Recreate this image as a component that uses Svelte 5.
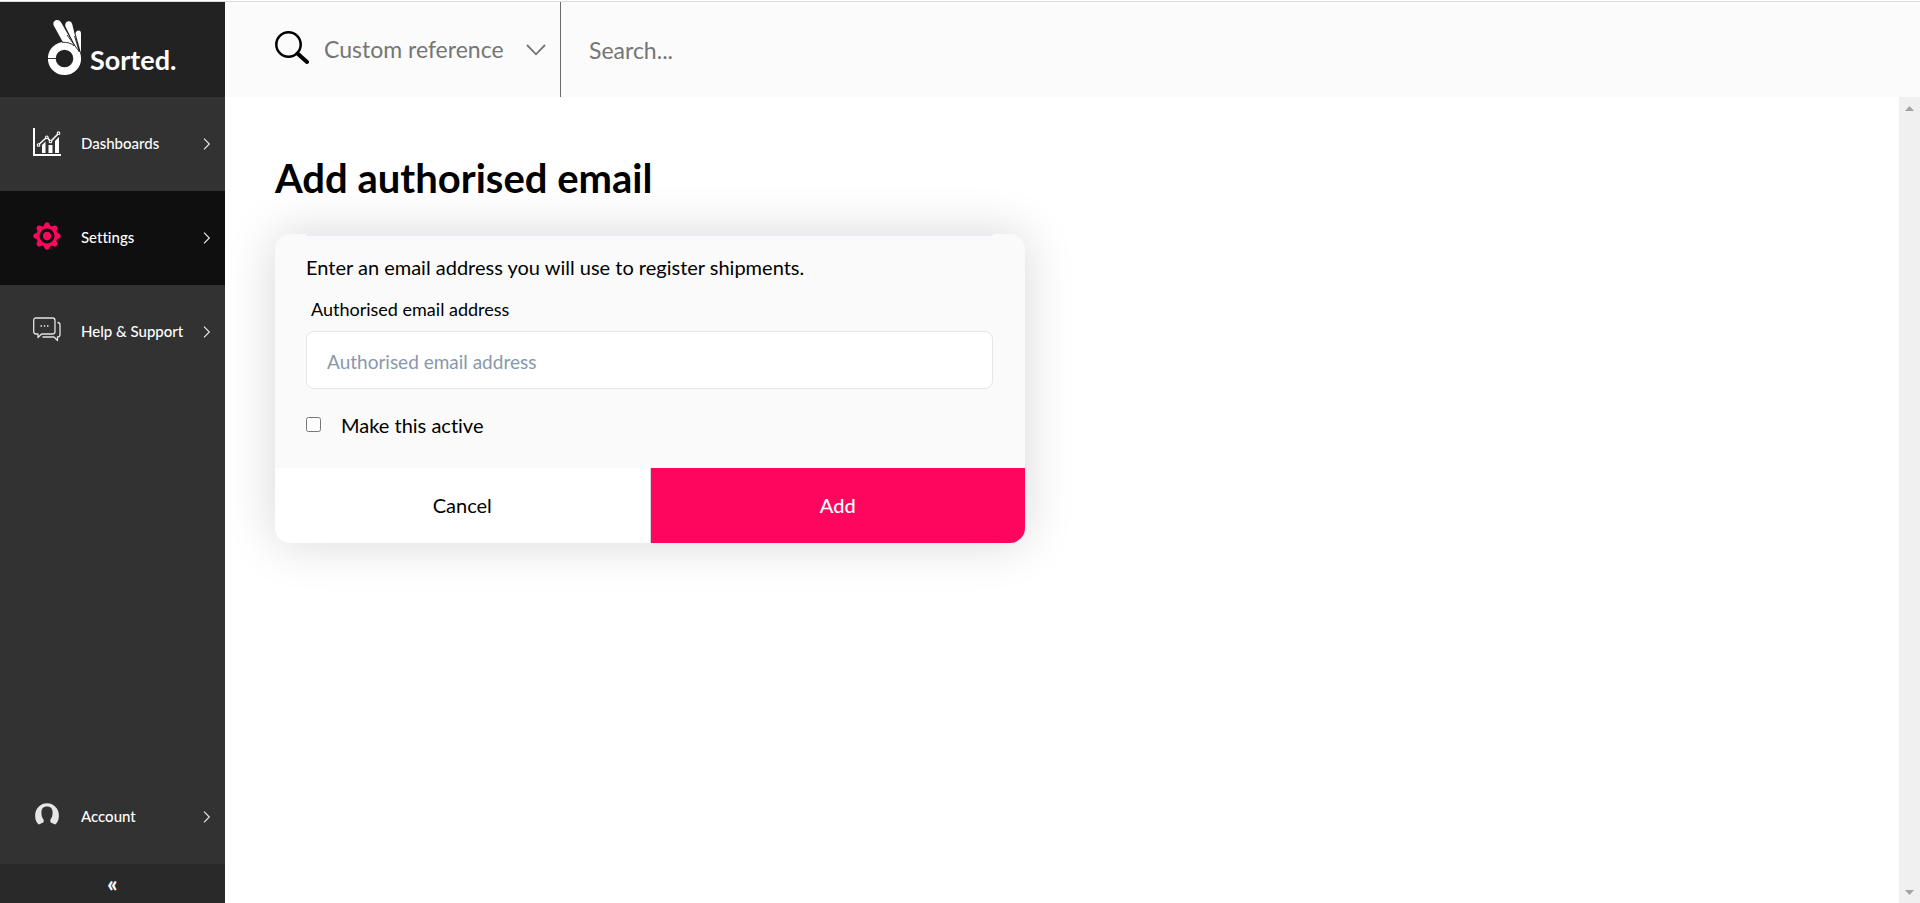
<script>
  let email = $state('');
  let active = $state(false);
  let query = $state('');

  const links = [
    { label: 'Dashboards', icon: 'chart' },
    { label: 'Settings', icon: 'gear', current: true },
    { label: 'Help & Support', icon: 'chat' }
  ];
  const teeth = [0, 45, 90, 135, 180, 225, 270, 315];
</script>

{#snippet chevron()}
  <svg class="chevron" width="8" height="12" viewBox="0 0 8 12" aria-hidden="true">
    <path d="M1 .7 6.3 6 1 11.3" fill="none" stroke="#e4e4e4" stroke-width="1.2" />
  </svg>
{/snippet}

<div class="page">
  <aside>
    <a class="brand" href="#home">
      <svg width="34" height="57" viewBox="0 0 34 57" aria-hidden="true">
        <g fill="#fff">
          <path d="M15 23.2 6.4 7.8C4.6 4.6 5.4 2 7.700 1.200c2.600-.800 4.400.300 5.600 2.600L26 26.200c-3-2.200-6.500-3.200-11-3z" />
          <path d="M17.400 7.500C16.700 4.700 18 2.600 20.200 2.200c2.200-.300 3.600.900 4.100 3.300L31 33c-1.300-3.500-3.300-6-5-8.500z" />
          <path d="M27.500 14.600c.400-2.300 1.600-3.200 3-3.200 1.600 0 2.500 1.100 2.500 3V34z" />
        </g>
        <circle cx="16.500" cy="39.500" r="12.700" fill="none" stroke="#fff" stroke-width="7.800" />
        <path d="M0 39.500h8.500M14 23.300c5-.300 8.500.700 12 3.400M19 16l12.500 17M26.500 17l5 16" fill="none" stroke="#222" stroke-width=".9" />
      </svg>
      <span>Sorted.</span>
    </a>

    <nav aria-label="Main">
      {#each links as link}
        <a class="item" class:current={link.current} href="#{link.icon}">
          <span class="glyph">
            {#if link.icon === 'chart'}
              <svg width="28" height="28" viewBox="0 0 28 28">
                <path d="M1 0v27h27" fill="none" stroke="#fff" stroke-width="2" />
                <path d="M9 17l3.500-3.500V25H9zM15.500 17h4v8h-4zM22 13l4-4v16h-4z" fill="#fff" />
                <path d="M5 17.300 14 9l3.500 4.500L26 5" fill="none" stroke="#fff" stroke-width="1.500" />
                <g fill="#323232" stroke="#fff" stroke-width="1.100">
                  <circle cx="5.500" cy="17" r="1.300" />
                  <circle cx="13.800" cy="9.300" r="1.300" />
                  <circle cx="17.500" cy="13.500" r="1.300" />
                  <circle cx="25.500" cy="5.200" r="1.300" />
                </g>
              </svg>
            {:else if link.icon === 'gear'}
              <svg width="28" height="28" viewBox="0 0 28 28">
                <g fill="#ff065e">
                  {#each teeth as angle}
                    <path d="M10 5.500 11.500 2Q12 .3 14 .3T16.500 2L18 5.500z" transform="rotate({angle} 14 14)" />
                  {/each}
                </g>
                <circle cx="14" cy="14" r="9" fill="#0f0f0f" stroke="#ff065e" stroke-width="3" />
                <circle cx="14" cy="14" r="4.200" fill="#ff065e" />
              </svg>
            {:else}
              <svg width="28" height="26" viewBox="0 0 28 26">
                <g fill="none" stroke="#e4e4e4" stroke-width="1.300" stroke-linejoin="round">
                  <path d="M3 1h16.500Q22 1 22 3.500v11q0 2.500-2.500 2.500H8.500L5 20.500V17H3Q.7 17 .7 14.500v-11Q.7 1 3 1z" />
                  <path d="M24.500 5.500q2.500 0 2.500 2.500v9.500q0 2.500-2.500 2.500v3.500L21 20H9.500" />
                </g>
                <path d="M7.500 9h1.500M10.800 9h1.500M14 9h1.500" stroke="#e4e4e4" stroke-width="1.500" />
              </svg>
            {/if}
          </span>
          <span class="name">{link.label}</span>
          {@render chevron()}
        </a>
      {/each}
    </nav>

    <a class="item account" href="#account">
      <span class="glyph">
        <svg width="24" height="24" viewBox="0 0 24 24">
          <path d="M3.700 21.500A12 12 0 0 1 .2 12 11.800 11.800 0 0 1 23.800 12a12 12 0 0 1-3.500 9.500c-1.600-.800-3-1.300-4.600-2.100-.600-.700-.600-2-.2-3 1.500-1.700 2.100-4 2.100-7C17.600 5.600 15.500 3.500 12 3.500S6.400 5.600 6.400 9.400c0 3 .600 5.300 2.100 7 .4 1 .4 2.300-.2 3-1.600.800-3 1.300-4.600 2.100z" fill="#e6e6e6" />
        </svg>
      </span>
      <span class="name">Account</span>
      {@render chevron()}
    </a>
    <button class="collapse" type="button" aria-label="Collapse menu">«</button>
  </aside>

  <div class="content">
    <header>
      <svg class="lens" width="34" height="34" viewBox="0 0 34 34" aria-hidden="true">
        <circle cx="13.500" cy="13.500" r="12.200" fill="none" stroke="#000" stroke-width="2.500" />
        <path d="M22.500 22.500 32 31" stroke="#000" stroke-width="4" stroke-linecap="round" />
      </svg>
      <div class="field">
        <select aria-label="Search by">
          <option>Custom reference</option>
        </select>
        <svg width="20" height="12" viewBox="0 0 20 12" aria-hidden="true">
          <path d="M1 1l9 9.300L19 1" fill="none" stroke="#757575" stroke-width="1.800" />
        </svg>
      </div>
      <input type="search" aria-label="Search" placeholder="Search..." bind:value={query} />
    </header>

    <div class="body">
      <main>
        <h1>Add authorised email</h1>
        <form onsubmit={(e) => e.preventDefault()}>
          <div class="fields">
            <p>Enter an email address you will use to register shipments.</p>
            <label class="caption" for="email">Authorised email address</label>
            <input id="email" type="email" placeholder="Authorised email address" bind:value={email} />
            <label class="check">
              <input type="checkbox" bind:checked={active} />
              <span>Make this active</span>
            </label>
          </div>
          <div class="actions">
            <button type="button">Cancel</button>
            <button class="primary" type="submit">Add</button>
          </div>
        </form>
      </main>
      <div class="scroll" aria-hidden="true">
        <svg width="9" height="5" viewBox="0 0 9 5"><path d="M0 5 4.500 0 9 5z" fill="#a3a3a3" /></svg>
        <svg width="9" height="5" viewBox="0 0 9 5"><path d="M0 0 4.500 5 9 0z" fill="#a3a3a3" /></svg>
      </div>
    </div>
  </div>
</div>

<style>
  :global(body) {
    margin: 0;
    background: #fff;
  }
  .page {
    box-sizing: border-box;
    display: flex;
    min-height: 100vh;
    padding-top: 1px;
    font-family: Lato, sans-serif;
    font-variant-ligatures: none;
    color: #000;
  }
  .page * {
    box-sizing: border-box;
  }
  input,
  select,
  button {
    font-family: inherit;
  }
  aside {
    display: flex;
    flex: 0 0 225px;
    flex-direction: column;
    border-top: 1px solid #d9dcdc;
    background: #323232;
  }
  .brand {
    display: flex;
    align-items: flex-start;
    gap: 8px;
    height: 95px;
    padding: 17px 0 0 48px;
    background: #222;
    color: #fff;
    font-size: 27px;
    font-weight: 700;
    line-height: 32px;
    text-decoration: none;
  }
  .brand span {
    padding-top: 25px;
  }
  .item {
    display: flex;
    align-items: center;
    height: 94px;
    padding: 0 14px 0 33px;
    color: #fff;
    font-size: 15px;
    font-weight: 500;
    text-decoration: none;
  }
  .current {
    background: #0f0f0f;
  }
  .glyph {
    display: flex;
    justify-content: center;
    width: 28px;
    margin-right: 20px;
    padding-bottom: 4px;
  }
  .name {
    padding-bottom: 2px;
  }
  .chevron {
    margin-left: auto;
  }
  .account {
    margin-top: auto;
  }
  .collapse {
    height: 39px;
    border: 0;
    background: #292929;
    color: #fff;
    font-size: 22px;
    font-weight: 900;
  }
  .content {
    display: flex;
    flex: 1;
    flex-direction: column;
    min-width: 0;
    border-top: 1px solid #d9dcdc;
  }
  header {
    display: flex;
    align-items: center;
    height: 95px;
    padding-left: 50px;
    background: #fbfbfb;
  }
  .lens {
    flex: none;
    margin-bottom: 4px;
  }
  .field {
    display: flex;
    flex: none;
    align-items: center;
    align-self: stretch;
    width: 252px;
    padding-right: 14px;
    border-right: 1px solid #6b6b6b;
  }
  select {
    flex: 1;
    min-width: 0;
    height: 60px;
    padding: 0 0 2px 15px;
    border: 0;
    appearance: none;
    background: none;
    color: #757575;
    font-size: 23px;
  }
  header input {
    flex: 1;
    min-width: 0;
    height: 60px;
    padding: 0 28px;
    border: 0;
    background: none;
    font-size: 23px;
  }
  header input::placeholder {
    color: #757575;
  }
  .body {
    display: flex;
    flex: 1;
  }
  main {
    flex: 1;
    padding: 57px 50px;
  }
  h1 {
    margin: 0 0 32px;
    font-size: 40px;
    font-weight: 700;
    line-height: 48px;
  }
  form {
    max-width: 750px;
    overflow: hidden;
    border-radius: 15px;
    background: #fafafa;
    box-shadow: 0 0 50px rgba(0, 0, 0, 0.16);
  }
  .fields {
    margin: 0 32px 0 31px;
    padding-bottom: 30px;
    border-top: 2px solid #ececf3;
  }
  p {
    margin: 0;
    padding-top: 18px;
    font-size: 20px;
    line-height: 26px;
  }
  .caption {
    display: block;
    margin: 17px 5px 10px;
    font-size: 18px;
    line-height: 24px;
  }
  #email {
    display: block;
    width: 100%;
    height: 58px;
    padding: 2px 20px 0;
    border: 1px solid #e6e6e6;
    border-radius: 8px;
    background: #fff;
    font-size: 19px;
  }
  #email::placeholder {
    color: #8898aa;
  }
  .check {
    display: flex;
    align-items: center;
    gap: 20px;
    margin-top: 23px;
    font-size: 20px;
    line-height: 26px;
  }
  .check input {
    width: 15px;
    height: 15px;
    margin: 0 0 2px;
  }
  .actions {
    display: flex;
  }
  .actions button {
    flex: 1;
    height: 75px;
    padding: 0 0 2px;
    border: 0;
    border-right: 1px solid #d4d4d4;
    background: #fff;
    color: #000;
    font-size: 20px;
  }
  .actions .primary {
    border-right: 0;
    background: #ff065e;
    color: #fff;
    font-weight: 500;
  }
  .scroll {
    display: flex;
    flex-direction: column;
    align-items: center;
    justify-content: space-between;
    width: 21px;
    padding: 9px 0 8px;
    background: #f0f0f0;
  }
</style>
